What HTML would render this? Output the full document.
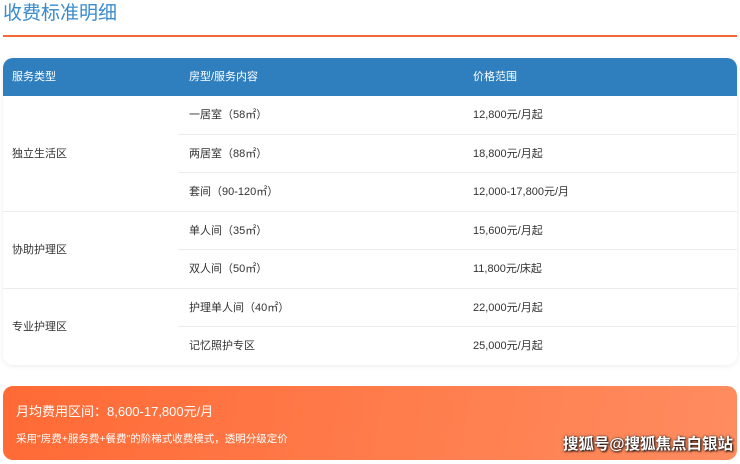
<!DOCTYPE html>
<html><head><meta charset="utf-8"><style>
*{margin:0;padding:0;box-sizing:border-box}
body{width:740px;height:464px;background:#fff;font-family:"Liberation Sans","Noto Sans CJK SC",sans-serif;position:relative;overflow:hidden;color:#333}
.title{position:absolute;left:3px;top:1px;font-size:19px;color:#3a8bcb;line-height:26px}
.line{position:absolute;left:3px;top:35px;width:734px;height:2px;background:#f26a35}
.tbl{position:absolute;left:3px;top:58px;width:734px;height:307px;border-radius:10px;overflow:hidden;box-shadow:0 1px 6px rgba(0,0,0,.08);background:#fff}
.hd{height:38px;background:#2f7fbf;color:#fff;font-size:11px;position:relative}
.hd span,.c{position:absolute;font-size:11px;line-height:14px}
.hd span{top:12px}
.r{position:absolute;left:0;width:734px;height:1px;background:#ececec}
.g{left:0}.s{left:175px;width:559px}
.wm{position:absolute;right:7px;bottom:10px;font-size:15.5px;font-weight:bold;color:#fff;text-shadow:1px 1px 2px #000,0 0 2px #333}
.box{position:absolute;left:3px;top:386px;width:734px;height:74px;border-radius:10px;background:linear-gradient(100deg,#ff6a35,#ff8c60);color:#fff}
</style></head><body>
<div class="title">收费标准明细</div>
<div class="line"></div>
<div class="tbl">
<div class="hd"><span style="left:9px">服务类型</span><span style="left:186px">房型/服务内容</span><span style="left:470px">价格范围</span></div>
<div class="r s" style="top:76px"></div>
<div class="r s" style="top:114px"></div>
<div class="r g" style="top:153px"></div>
<div class="r s" style="top:191px"></div>
<div class="r g" style="top:230px"></div>
<div class="r s" style="top:268px"></div>
<div class="c" style="left:9px;top:89px">独立生活区</div>
<div class="c" style="left:9px;top:185px">协助护理区</div>
<div class="c" style="left:9px;top:262px">专业护理区</div>
<div class="c" style="left:186px;top:50px">一居室（58㎡）</div><div class="c" style="left:470px;top:50px">12,800元/月起</div>
<div class="c" style="left:186px;top:89px">两居室（88㎡）</div><div class="c" style="left:470px;top:89px">18,800元/月起</div>
<div class="c" style="left:186px;top:127px">套间（90-120㎡）</div><div class="c" style="left:470px;top:127px">12,000-17,800元/月</div>
<div class="c" style="left:186px;top:166px">单人间（35㎡）</div><div class="c" style="left:470px;top:166px">15,600元/月起</div>
<div class="c" style="left:186px;top:204px">双人间（50㎡）</div><div class="c" style="left:470px;top:204px">11,800元/床起</div>
<div class="c" style="left:186px;top:243px">护理单人间（40㎡）</div><div class="c" style="left:470px;top:243px">22,000元/月起</div>
<div class="c" style="left:186px;top:281px">记忆照护专区</div><div class="c" style="left:470px;top:281px">25,000元/月起</div>
</div>
<div class="box">
<div style="position:absolute;left:13px;top:15px;font-size:13px">月均费用区间：8,600-17,800元/月</div>
<div style="position:absolute;left:13px;top:45px;font-size:10.5px">采用"房费+服务费+餐费"的阶梯式收费模式，透明分级定价</div>
</div>
<div class="wm">搜狐号@搜狐焦点白银站</div>
</body></html>
